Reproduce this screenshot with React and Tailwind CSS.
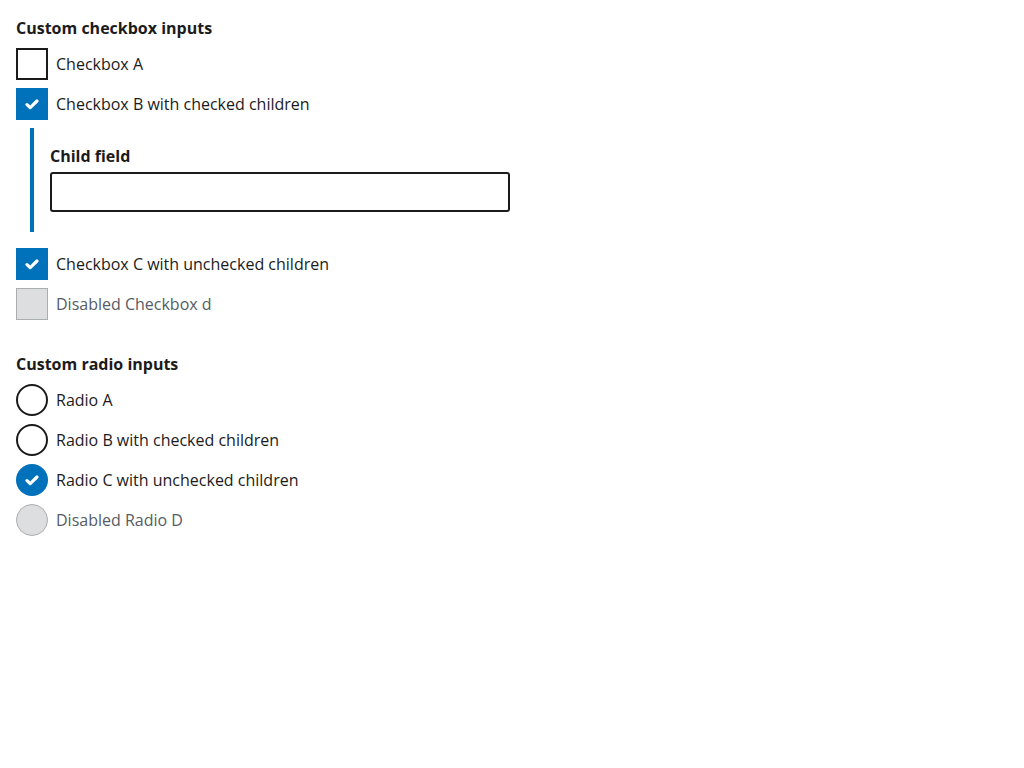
import React from "react";

const Check = () => (
  <svg width="14" height="11" viewBox="0 0 14 11" fill="none">
    <path d="M2 5.6 L5.2 8.6 L12 2" stroke="white" strokeWidth="3.2" strokeLinecap="round" strokeLinejoin="round" />
  </svg>
);

function Row({ kind, state, label }) {
  const round = kind === "radio" ? "rounded-full" : "";
  let box;
  if (state === "checked") {
    box = (
      <span className={`w-8 h-8 shrink-0 bg-[#0071bb] flex items-center justify-center ${round}`}>
        <Check />
      </span>
    );
  } else if (state === "disabled") {
    box = <span className={`w-8 h-8 shrink-0 bg-[#dcdee0] border border-[#a9aeb1] ${round}`} />;
  } else {
    box = <span className={`w-8 h-8 shrink-0 border-2 border-[#1b1b1b] bg-white ${round}`} />;
  }
  return (
    <div className="flex items-center gap-2 h-8">
      {box}
      <span className={`text-base leading-6 ${state === "disabled" ? "text-[#565c65]" : "text-[#1b1b1b]"}`}>{label}</span>
    </div>
  );
}

export default function App() {
  return (
    <div className="p-4 bg-white min-h-[768px] text-[#1b1b1b]" style={{ fontFamily: '"Open Sans", sans-serif' }}>
      <div className="font-bold text-base leading-6">Custom checkbox inputs</div>
      <div className="mt-2 flex flex-col gap-2">
        <Row kind="checkbox" label="Checkbox A" />
        <Row kind="checkbox" state="checked" label="Checkbox B with checked children" />
        <div className="ml-[14px] border-l-4 border-[#0071bb] pl-4 pt-4 pb-5">
          <div className="font-bold text-base leading-6">Child field</div>
          <input className="mt-1 block w-[460px] h-10 border-2 border-[#1b1b1b] rounded-[3px] px-2 outline-none" />
        </div>
        <div className="mt-2">
          <Row kind="checkbox" state="checked" label="Checkbox C with unchecked children" />
        </div>
        <Row kind="checkbox" state="disabled" label="Disabled Checkbox d" />
      </div>
      <div className="mt-8 font-bold text-base leading-6">Custom radio inputs</div>
      <div className="mt-2 flex flex-col gap-2">
        <Row kind="radio" label="Radio A" />
        <Row kind="radio" label="Radio B with checked children" />
        <Row kind="radio" state="checked" label="Radio C with unchecked children" />
        <Row kind="radio" state="disabled" label="Disabled Radio D" />
      </div>
    </div>
  );
}
